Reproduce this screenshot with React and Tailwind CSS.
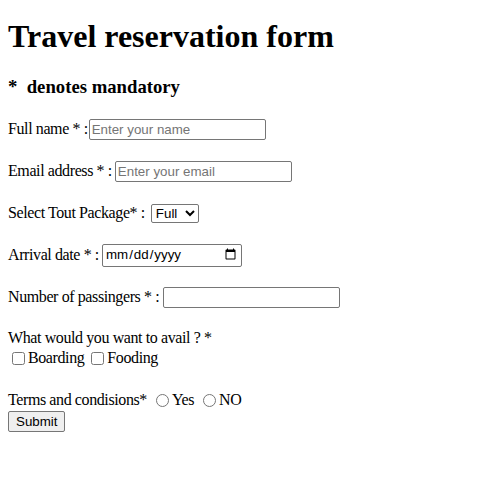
export default function App() {
  const field =
    "h-[21px] w-[177px] rounded-[2px] border border-[#767676] bg-white px-[2px] py-[1px] font-['Liberation_Sans',Arial,sans-serif] text-[13.333px] tracking-normal text-black placeholder:text-[#757575]";

  return (
    <div className="min-h-screen bg-white px-2 font-['Liberation_Serif','Times_New_Roman',serif] text-[16px] text-black">
      <h1 className="pt-[18px] text-[32px] font-bold leading-[37px]">Travel reservation form</h1>
      <h3 className="mt-[21px] text-[18.72px] font-bold leading-[22px]">*&nbsp; denotes mandatory</h3>

      <form className="tracking-[-0.4px]" onSubmit={(e) => e.preventDefault()}>
        <div className="mt-[20px] flex h-[22px] items-center">
          <span>Full name * :</span>
          <input className={`ml-[1px] ${field}`} type="text" placeholder="Enter your name" />
        </div>

        <div className="mt-[20px] flex h-[22px] items-center">
          <span>Email address * :</span>
          <input className={`ml-[3px] ${field}`} type="email" placeholder="Enter your email" />
        </div>

        <div className="mt-[20px] flex h-[22px] items-center">
          <span>Select Tout Package* :</span>
          <select className="ml-[6px] h-[19px] w-[48px] rounded-[2px] border border-[#767676] bg-white font-['Liberation_Sans',Arial,sans-serif] text-[13.333px] tracking-normal text-black">
            <option>Full</option>
            <option>Half</option>
          </select>
        </div>

        <div className="mt-[20px] flex h-[22px] items-center">
          <span>Arrival date * :</span>
          <input
            className="ml-[3px] h-[23px] w-[140px] rounded-[2px] border border-[#767676] bg-white px-[2px] font-['Liberation_Sans',Arial,sans-serif] text-[13.333px] tracking-normal text-black"
            type="date"
          />
        </div>

        <div className="mt-[20px] flex h-[22px] items-center">
          <span>Number of passingers * :</span>
          <input className={`ml-[4px] ${field}`} type="number" />
        </div>

        <div className="mt-[21px] h-[18px] leading-[18px]">What would you want to avail ? *</div>
        <div className="mt-[2px] flex h-[18px] items-center">
          <input className="ml-[4px] mr-[3px] h-[13px] w-[13px]" type="checkbox" id="boarding" />
          <label htmlFor="boarding">Boarding</label>
          <input className="ml-[7px] mr-[3px] h-[13px] w-[13px]" type="checkbox" id="fooding" />
          <label htmlFor="fooding">Fooding</label>
        </div>

        <div className="mt-[24px] flex h-[18px] items-center">
          <span>Terms and condisions*</span>
          <input className="ml-[9px] mr-[3px] h-[13px] w-[13px]" type="radio" name="terms" id="yes" />
          <label htmlFor="yes">Yes</label>
          <input className="ml-[9px] mr-[3px] h-[13px] w-[13px]" type="radio" name="terms" id="no" />
          <label htmlFor="no">NO</label>
        </div>

        <div className="mt-0">
          <button
            className="h-[21px] rounded-[2px] border border-[#767676] bg-[#efefef] px-[7px] font-['Liberation_Sans',Arial,sans-serif] text-[13.333px] tracking-normal text-black"
            type="submit"
          >
            Submit
          </button>
        </div>
      </form>
    </div>
  );
}
